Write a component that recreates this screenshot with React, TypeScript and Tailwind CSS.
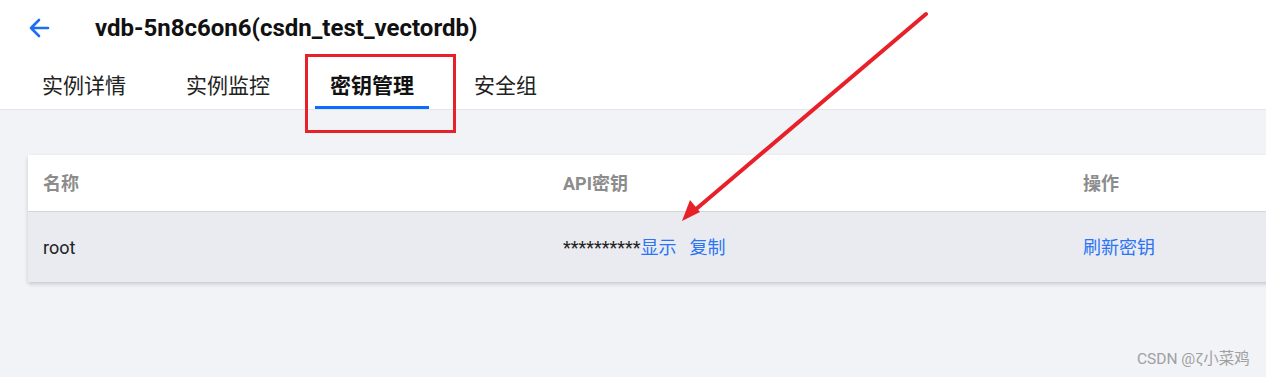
import React from "react";

export default function App() {
  const font = { fontFamily: 'Roboto, "Noto Sans CJK SC", sans-serif' };
  return (
    <div
      className="relative w-[1266px] h-[377px] overflow-hidden bg-[#f2f3f7]"
      style={font}
    >
      <div className="bg-white border-b border-[#e3e5ea]">
        <div className="flex items-center h-[56px]">
          <div className="w-[95px] flex items-center pl-[28px]">
            <svg width="22" height="22" viewBox="0 0 22 22" fill="none">
              <path
                d="M20 11H3M11 3L3 11L11 19"
                stroke="#1a6ff5"
                strokeWidth="2.6"
                strokeLinecap="round"
                strokeLinejoin="round"
              />
            </svg>
          </div>
          <div className="text-[24px] font-bold text-[#111] leading-none">
            vdb-5n8c6on6(csdn_test_vectordb)
          </div>
        </div>
        <div className="flex gap-[30px] pl-[27px] h-[53px]">
          {["实例详情", "实例监控", "密钥管理", "安全组"].map((t, i) => (
            <div
              key={t}
              className={
                i === 2
                  ? "px-[15px] flex items-center border-b-[3px] border-[#0a6cff] text-[21px] font-bold text-[#111] pt-[12px]"
                  : "px-[15px] flex items-center border-b-[3px] border-transparent text-[21px] text-[#222] pt-[12px]"
              }
            >
              {t}
            </div>
          ))}
        </div>
      </div>

      <div className="pt-[45px] pl-[28px]">
        <div className="w-[1260px] shadow-[0_2px_4px_rgba(0,0,0,0.18)]">
          <div className="grid grid-cols-[520px_520px_220px] h-[57px] bg-white border-b border-[#d2d6de] items-center text-[18px] font-bold text-[#8c8c8c]">
            <div className="pl-[15px]">名称</div>
            <div className="pl-[15px]">API密钥</div>
            <div className="pl-[15px]">操作</div>
          </div>
          <div className="grid grid-cols-[520px_520px_220px] h-[70px] bg-[#e9ebf0] items-center text-[18px] text-[#222]">
            <div className="pl-[15px]">root</div>
            <div className="pl-[15px] flex items-center">
              <span>**********</span>
              <span className="text-[#2a74f5]">显示</span>
              <span className="text-[#2a74f5] ml-[13px]">复制</span>
            </div>
            <div className="pl-[15px] text-[#2a74f5]">刷新密钥</div>
          </div>
        </div>
      </div>

      {/* annotation rectangle */}
      <div className="absolute left-[305px] top-[54px] w-[151px] h-[79px] border-[3px] border-[#e8202a]" />

      {/* annotation arrow */}
      <svg
        className="absolute left-0 top-0"
        width="1266"
        height="377"
        viewBox="0 0 1266 377"
      >
        <line
          x1="926"
          y1="14"
          x2="695"
          y2="210"
          stroke="#e8202a"
          strokeWidth="4"
          strokeLinecap="round"
        />
        <polygon points="682,221 690,200 700,212" fill="#e8202a" />
      </svg>

      <div className="absolute left-[1137px] top-[348px] text-[15.5px] text-[#a0a0a0]">
        CSDN @ζ小菜鸡
      </div>
    </div>
  );
}
